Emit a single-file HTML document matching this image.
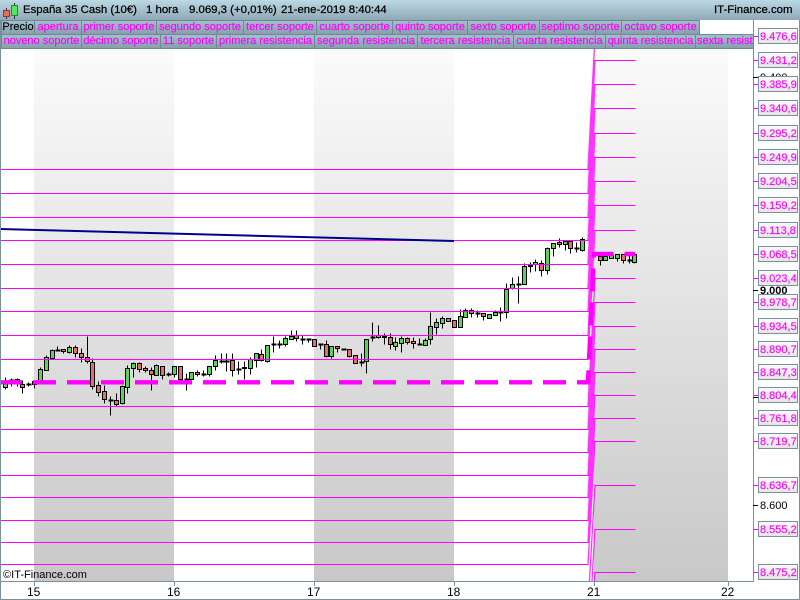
<!DOCTYPE html>
<html><head><meta charset="utf-8"><style>
html,body{margin:0;padding:0;background:#fff;width:800px;height:600px;overflow:hidden}
#r{position:relative;width:800px;height:600px;overflow:hidden;background:#fff;font:11px "Liberation Sans",Arial,sans-serif}
#bar{position:absolute;left:0;top:0;width:800px;height:20px;background:linear-gradient(#bcd8e4,#8fa9b6)}
#bar span{position:absolute;top:3px;color:#000;font-size:11.4px;line-height:14px;white-space:nowrap;-webkit-text-stroke:.25px #000}
.t{position:absolute;box-sizing:border-box;height:15px;line-height:13px;color:#f0f;background:linear-gradient(#a2c0cc,#86a0ac);border:1px solid #6f8894;white-space:nowrap;overflow:hidden;text-align:center;-webkit-text-stroke:.15px #f0f}
.t.k{color:#000;-webkit-text-stroke:.15px #000}
svg{position:absolute;left:0;top:0}
text{font-family:"Liberation Sans",Arial,sans-serif;font-size:11px}
</style></head><body><div id="r">
<svg width="800" height="600" viewBox="0 0 800 600">
<defs>
<linearGradient id="g" gradientUnits="userSpaceOnUse" x1="0" y1="48" x2="0" y2="581"><stop offset="0" stop-color="#fbfbfb"/><stop offset="1" stop-color="#c8c8c8"/></linearGradient>
<linearGradient id="b" x1="0" y1="0" x2="0" y2="1"><stop offset="0" stop-color="#fafafa"/><stop offset="1" stop-color="#e6e6e6"/></linearGradient>
<clipPath id="c"><rect x="0" y="48" width="753" height="533"/></clipPath>
</defs>
<rect x="34" y="48" width="140" height="533" fill="url(#g)"/>
<rect x="314" y="48" width="140" height="533" fill="url(#g)"/>
<rect x="594" y="48" width="134" height="533" fill="url(#g)"/>
<g transform="translate(.5 .5)" shape-rendering="crispEdges">
<path fill="none" stroke="#000" d="M5 377V389M11 378V386M17 378V386M22 380V393M28 382V386M34 381V388M40 367V383M46 355V370M52 349V358M57 346V351M63 349V353M69 345V353M75 345V357M81 348V362M87 336V363M92 358V389M98 381V396M104 385V403M110 396V415M116 393V406M122 385V404M127 365V393M133 362V377M139 362V372M145 366V372M151 367V390M156 364V375M162 366V379M168 372V376M174 366V377M180 366V380M186 373V390M191 372V379M197 370V376M203 370V376M209 366V376M215 355V370M221 353V363M226 353V371M232 353V376M238 361V374M244 361V379M250 357V374M256 353V367M261 349V361M267 345V362M273 336V352M279 340V348M285 336V346M291 330V339M296 330V341M302 335V344M308 338V342M314 339V346M320 343V349M326 340V357M331 346V358M337 346V352M343 348V350M349 349V357M355 355V363M361 353V366M366 339V373M372 322V341M378 325V338M384 333V344M390 333V349M395 337V350M401 336V352M407 337V344M413 337V348M419 338V345M425 338V345M430 312V344M436 318V334M442 316V328M448 318V321M454 320V327M460 309V327M465 308V317M471 308V317M477 310V317M483 313V320M489 314V318M495 310V315M500 307V321M506 283V318M512 277V289M518 276V303M524 263V284M530 262V272M535 259V271M541 260V276M547 247V274M553 243V256M559 238V247M565 240V250M570 240V253M576 242V252M582 237V251M600 256V265M605 256V260M611 255V258M617 254V261M623 254V263M629 254V263M634 252V263"/>
<path fill="#55d655" stroke="#000" d="M3 383h4V387h-4zM38 369h4V381h-4zM44 357h4V370h-4zM50 350h4V358h-4zM67 347h4V352h-4zM120 386h4V403h-4zM125 368h4V387h-4zM131 363h4V368h-4zM154 365h4V375h-4zM172 366h4V374h-4zM189 372h4V379h-4zM207 366h4V374h-4zM213 360h4V366h-4zM242 367h4V368h-4zM248 359h4V368h-4zM254 353h4V360h-4zM265 345h4V361h-4zM283 338h4V344h-4zM289 336h4V339h-4zM329 346h4V356h-4zM364 339h4V361h-4zM376 335h4V337h-4zM393 342h4V346h-4zM399 338h4V343h-4zM423 340h4V345h-4zM428 326h4V339h-4zM434 322h4V327h-4zM440 318h4V323h-4zM458 316h4V327h-4zM463 310h4V317h-4zM487 314h4V318h-4zM493 312h4V315h-4zM504 289h4V312h-4zM510 284h4V288h-4zM522 266h4V284h-4zM528 265h4V266h-4zM533 262h4V264h-4zM545 248h4V270h-4zM551 243h4V248h-4zM563 241h4V244h-4zM580 239h4V250h-4zM603 256h4V260h-4zM609 255h4V258h-4zM615 254h4V258h-4zM632 254h4V262h-4z"/>
<path fill="#e27069" stroke="#000" d="M15 379h4V381h-4zM20 384h4V387h-4zM32 381h4V384h-4zM61 349h4V351h-4zM73 347h4V353h-4zM79 353h4V357h-4zM85 357h4V361h-4zM90 362h4V386h-4zM96 385h4V392h-4zM102 391h4V399h-4zM114 400h4V404h-4zM137 363h4V369h-4zM143 368h4V370h-4zM149 370h4V374h-4zM160 366h4V375h-4zM178 366h4V379h-4zM195 372h4V374h-4zM230 360h4V370h-4zM259 354h4V360h-4zM294 335h4V338h-4zM312 339h4V346h-4zM324 344h4V356h-4zM335 346h4V348h-4zM347 349h4V356h-4zM353 355h4V363h-4zM382 336h4V337h-4zM388 337h4V344h-4zM405 338h4V342h-4zM411 341h4V343h-4zM446 318h4V321h-4zM452 320h4V327h-4zM469 310h4V313h-4zM481 313h4V316h-4zM539 263h4V270h-4zM557 242h4V244h-4zM568 241h4V248h-4zM598 256h4V260h-4zM621 254h4V260h-4z"/>
<path fill="none" stroke="#000" stroke-width="2" d="M9 380h5M26 384h5M55 350h5M108 400h5M166 374h5M184 379h5M201 374h5M219 361h5M224 361h5M236 369h5M271 344h5M277 344h5M300 339h5M306 339h5M318 344h5M341 349h5M359 362h5M370 337h5M417 344h5M475 313h5M498 312h5M516 284h5M574 248h5M627 260h5"/>
<path fill="none" stroke="#f0f" d="M0 169H588M0 193H588M0 217H588M0 240H588M0 264H588M0 288H588M0 311H588M0 335H588M0 359H588M0 406H588M0 429H588M0 452H588M0 475H588M0 497H588M0 520H588M0 542H588M0 564H588M594 60H635M594 84H635M594 108H635M594 133H635M594 157H635M594 181H635M594 205H635M594 230H635M594 278H635M594 302H635M594 326H635M594 349H635M594 372H635M594 395H635M594 418H635M594 441H635M594 485H635M594 529H635M594 572H635"/>
</g>
<g clip-path="url(#c)" fill="none">
<path stroke="#00008b" stroke-width="2" d="M0 229L454 241"/>
<path stroke="#f0f" stroke-width="1.3" stroke-opacity=".8" d="M588 169L595 36M588 193L595 60M588 217L595 84M588 240L595 108M588 264L595 133M588 288L595 157M588 311L595 181M588 335L595 205M588 359L595 230M588 406L595 278M588 429L595 302M588 452L595 326M588 475L595 349M588 497L595 372M588 520L595 395M588 542L595 418M588 564L595 441M589.45 581L595 485M592 581L595 529M594.5 581L595 572"/>
<path stroke="#f0f" stroke-width="4.4" stroke-dasharray="23 11" d="M0 382.3H588L594 254H635"  stroke-dashoffset="1"/>
</g>
<text x="3" y="578" fill="#000" style="word-spacing:-3px">© IT-Finance.com</text>
<g shape-rendering="crispEdges">
<path stroke="#7a909c" fill="none" d="M.5 0V600M0 581.5H754M753.5 20V582M0 599.5H800M799.5 0V600M34.5 581V586M174.5 581V586M314.5 581V586M454.5 581V586M594.5 581V586M728.5 581V586"/>
<path stroke="#000" d="M753 77.5H758M753 290.5H758M753 397.5H758M753 505.5H758"/>
<path stroke="#f0f" d="M753 36.5H758M753 60.5H758M753 84.5H758M753 108.5H758M753 133.5H758M753 157.5H758M753 181.5H758M753 205.5H758M753 230.5H758M753 254.5H758M753 278.5H758M753 302.5H758M753 326.5H758M753 349.5H758M753 372.5H758M753 395.5H758M753 418.5H758M753 441.5H758M753 485.5H758M753 529.5H758M753 572.5H758"/>
</g>
<g fill="#000">
<text x="760" y="81">9.400</text>
<text x="760" y="294" font-weight="bold">9.000</text>
<text x="760" y="509">8.600</text>
</g>
<g fill="url(#b)" stroke="#7a909c" shape-rendering="crispEdges">
<rect x="758.5" y="28.5" width="39" height="15"/><rect x="758.5" y="52.5" width="39" height="15"/><rect x="758.5" y="76.5" width="39" height="15"/><rect x="758.5" y="100.5" width="39" height="15"/><rect x="758.5" y="125.5" width="39" height="15"/><rect x="758.5" y="149.5" width="39" height="15"/><rect x="758.5" y="173.5" width="39" height="15"/><rect x="758.5" y="197.5" width="39" height="15"/><rect x="758.5" y="222.5" width="39" height="15"/><rect x="758.5" y="246.5" width="39" height="15"/><rect x="758.5" y="270.5" width="39" height="15"/><rect x="758.5" y="294.5" width="39" height="15"/><rect x="758.5" y="318.5" width="39" height="15"/><rect x="758.5" y="341.5" width="39" height="15"/><rect x="758.5" y="364.5" width="39" height="15"/><rect x="758.5" y="387.5" width="39" height="15"/><rect x="758.5" y="410.5" width="39" height="15"/><rect x="758.5" y="433.5" width="39" height="15"/><rect x="758.5" y="477.5" width="39" height="15"/><rect x="758.5" y="521.5" width="39" height="15"/><rect x="758.5" y="564.5" width="39" height="15"/>
</g>
<g fill="#f0f" stroke="#f0f" stroke-width=".15">
<text x="760" y="40">9.476,6</text><text x="760" y="64">9.431,2</text><text x="760" y="88">9.385,9</text><text x="760" y="112">9.340,6</text><text x="760" y="137">9.295,2</text><text x="760" y="161">9.249,9</text><text x="760" y="185">9.204,5</text><text x="760" y="209">9.159,2</text><text x="760" y="234">9.113,8</text><text x="760" y="258">9.068,5</text><text x="760" y="282">9.023,4</text><text x="760" y="306">8.978,7</text><text x="760" y="330">8.934,5</text><text x="760" y="353">8.890,7</text><text x="760" y="376">8.847,3</text><text x="760" y="399">8.804,4</text><text x="760" y="422">8.761,8</text><text x="760" y="445">8.719,7</text><text x="760" y="489">8.636,7</text><text x="760" y="533">8.555,2</text><text x="760" y="576">8.475,2</text>
</g>
<g fill="#000">
<text x="27" y="596" style="font-size:12px">15</text><text x="167" y="596" style="font-size:12px">16</text><text x="307" y="596" style="font-size:12px">17</text><text x="447" y="596" style="font-size:12px">18</text><text x="587" y="596" style="font-size:12px">21</text><text x="721" y="596" style="font-size:12px">22</text>
</g>
</svg>
<div id="bar">
<span style="left:23px">España 35 Cash (10€)</span>
<span style="left:146px">1 hora</span>
<span style="left:189px">9.069,3 (+0,01%)</span>
<span style="left:281px">21-ene-2019 8:40:44</span>
<span style="left:714px">IT-Finance.com</span>
<svg width="22" height="20" style="left:0;top:0"><g shape-rendering="crispEdges"><path stroke="#333" d="M6.5 8V19M14.5 3V19"/><rect x="3.5" y="10.5" width="6" height="6" fill="#ee6a60" stroke="#8a3a30"/><rect x="11.5" y="5.5" width="6" height="10" fill="#55e855" stroke="#2a8a2a"/></g></svg>
</div>
<div class="t k" style="left:1px;top:20px;width:34px">Precio</div>
<div class="t" style="left:34px;top:20px;width:48px">apertura</div>
<div class="t" style="left:81px;top:20px;width:76px">primer soporte</div>
<div class="t" style="left:156px;top:20px;width:88px">segundo soporte</div>
<div class="t" style="left:243px;top:20px;width:74px">tercer soporte</div>
<div class="t" style="left:316px;top:20px;width:77px">cuarto soporte</div>
<div class="t" style="left:392px;top:20px;width:76px">quinto soporte</div>
<div class="t" style="left:467px;top:20px;width:73px">sexto soporte</div>
<div class="t" style="left:539px;top:20px;width:83px">septimo soporte</div>
<div class="t" style="left:621px;top:20px;width:79px">octavo soporte</div>
<div class="t" style="left:1px;top:34px;width:81px">noveno soporte</div>
<div class="t" style="left:81px;top:34px;width:80px">décimo soporte</div>
<div class="t" style="left:160px;top:34px;width:57px">11 soporte</div>
<div class="t" style="left:216px;top:34px;width:99px">primera resistencia</div>
<div class="t" style="left:314px;top:34px;width:104px">segunda resistencia</div>
<div class="t" style="left:417px;top:34px;width:97px">tercera resistencia</div>
<div class="t" style="left:513px;top:34px;width:93px">cuarta resistencia</div>
<div class="t" style="left:605px;top:34px;width:91px">quinta resistencia</div>
<div class="t" style="left:695px;top:34px;width:59px;text-align:left;padding-left:1px">sexta resistencia</div>
</div></body></html>
